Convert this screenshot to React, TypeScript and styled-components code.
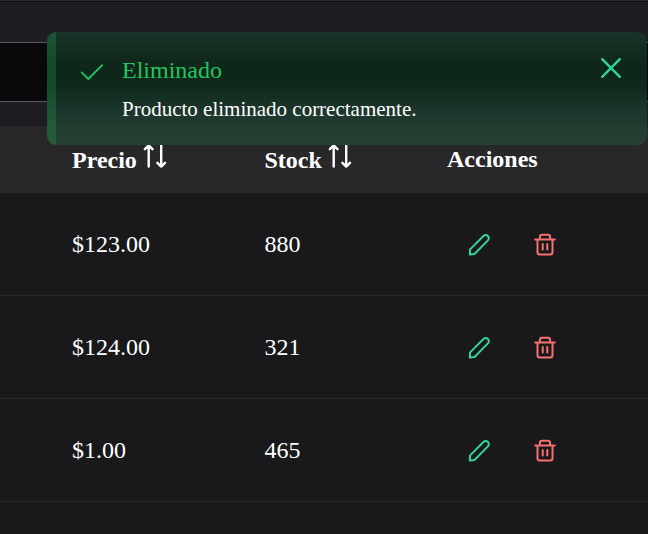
import React from "react";
import styled, { createGlobalStyle } from "styled-components";

const GlobalStyle = createGlobalStyle`
  * { box-sizing: border-box; }
  body {
    margin: 0;
    background: #18181b;
    color: #fff;
    font-family: "Liberation Serif", "Times New Roman", serif;
    font-size: 24px;
    overflow: hidden;
  }
`;

const Page = styled.main`
  position: relative;
  width: 648px;
  height: 534px;
  overflow: hidden;
  background: #19191b;
`;

const Toolbar = styled.header`
  height: 126px;
  padding-top: 41px;
  border-top: 1px solid #2a2a2d;
  background: #1e1d22;
  box-shadow: inset 0 1px 0 #101012;
`;

const SearchField = styled.div`
  height: 60px;
  background: #09090b;
  border: solid #58585d;
  border-width: 1px 0;
`;

const Row = styled.div`
  display: grid;
  grid-template-columns: 192.5px 182.5px 1fr;
  align-items: center;
  height: 103px;
  padding-left: 72px;
  border-bottom: 1px solid #2a2a2c;
  line-height: 28px;
`;

const HeadRow = styled(Row)`
  height: 67px;
  background: #28282a;
  border-bottom: 0;
  font-weight: 700;
`;

const HeadCell = styled.div<{ $lift?: number }>`
  display: flex;
  align-items: center;
  padding-top: 1px;
  padding-bottom: ${({ $lift = 0 }) => $lift}px;
`;

const SortSvg = styled.svg`
  margin: -8px 0 0 6px;
`;

const Actions = styled.div`
  display: flex;
  align-items: center;
  gap: 42px;
  padding: 2px 0 0 20px;
  svg { display: block; }
`;

const Toast = styled.aside`
  position: absolute;
  top: 32px;
  left: 47px;
  display: flex;
  align-items: flex-start;
  width: 600px;
  height: 113px;
  padding: 24px;
  border-left: 9px solid rgba(34, 197, 94, 0.22);
  border-radius: 9px;
  background: linear-gradient(
    #1b3429 0,
    #162f23 14px,
    #11291d 28px,
    #0e261a 40px,
    #11291d 53px,
    #162f23 65px,
    #1d362b 79px,
    #233c30 95px,
    #274033 113px
  );
`;

const CheckSvg = styled.svg`
  flex: none;
  margin-top: 4px;
`;

const ToastText = styled.div`
  flex: 1;
  padding-left: 18px;
`;

const ToastTitle = styled.div`
  color: #22c55e;
  line-height: 28px;
`;

const ToastDetail = styled.div`
  margin-top: 13px;
  font-size: 21px;
  line-height: 24px;
`;

const CloseButton = styled.button`
  display: flex;
  margin: 0;
  padding: 0;
  border: 0;
  background: none;
  color: #34d399;
`;

const SortIcon = () => (
  <SortSvg width="24" height="24" viewBox="0 0 24 24" fill="none" stroke="#fff" strokeWidth="2.4" strokeLinecap="round" strokeLinejoin="round">
    <path d="M5.7 22.6V1.4M1.9 5.2l3.8-3.8 3.8 3.8M18.2 1.4v21.2M14.4 18.8l3.8 3.8 3.8-3.8" />
  </SortSvg>
);

const PencilIcon = () => (
  <svg width="24" height="24" viewBox="0 0 24 24" fill="none" stroke="#34d399" strokeWidth="2" strokeLinejoin="round">
    <path d="M2.8 21.6l.3-5.2L16.5 3a2.95 2.95 0 0 1 4.4 4.4L7.5 21z" />
  </svg>
);

const TrashIcon = () => (
  <svg width="24" height="24" viewBox="0 0 24 24" fill="none" stroke="#f87171" strokeWidth="2" strokeLinecap="round" strokeLinejoin="round">
    <path d="M2.2 6.5h19.6M4.5 6.5v12.8a2.3 2.3 0 0 0 2.3 2.3h10.4a2.3 2.3 0 0 0 2.3-2.3V6.5M6.9 6.5V4a2.2 2.2 0 0 1 2.2-2.2h5.8A2.2 2.2 0 0 1 17.1 4v2.5M9.7 11v5.5M14.3 11v5.5" />
  </svg>
);

const products = [
  { price: "$123.00", stock: 880 },
  { price: "$124.00", stock: 321 },
  { price: "$1.00", stock: 465 },
];

export default function App() {
  return (
    <Page>
      <GlobalStyle />
      <Toolbar>
        <SearchField />
      </Toolbar>
      <HeadRow>
        <HeadCell>Precio<SortIcon /></HeadCell>
        <HeadCell>Stock<SortIcon /></HeadCell>
        <HeadCell $lift={3}>Acciones</HeadCell>
      </HeadRow>
      {products.map((p) => (
        <Row key={p.price}>
          <span>{p.price}</span>
          <span>{p.stock}</span>
          <Actions>
            <PencilIcon />
            <TrashIcon />
          </Actions>
        </Row>
      ))}
      <Toast role="alert">
        <CheckSvg width="24" height="24" viewBox="0 0 24 24" fill="none" stroke="#22c55e" strokeWidth="1.8" strokeLinecap="round" strokeLinejoin="round">
          <path d="M1.7 12.4l6.6 6.6L22.2 5.2" />
        </CheckSvg>
        <ToastText>
          <ToastTitle>Eliminado</ToastTitle>
          <ToastDetail>Producto eliminado correctamente.</ToastDetail>
        </ToastText>
        <CloseButton aria-label="Cerrar">
          <svg width="24" height="24" viewBox="0 0 24 24" fill="none" stroke="currentColor" strokeWidth="2.4" strokeLinecap="round">
            <path d="M3.2 3.2l17.6 17.6M20.8 3.2L3.2 20.8" />
          </svg>
        </CloseButton>
      </Toast>
    </Page>
  );
}
